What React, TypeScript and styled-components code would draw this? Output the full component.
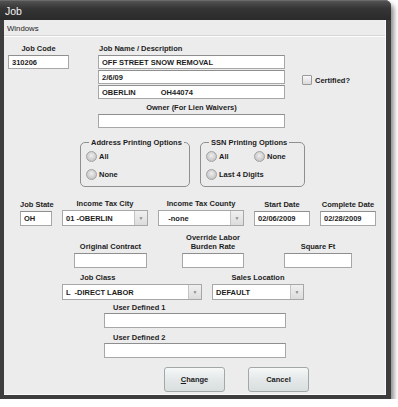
import React from 'react';
import styled, { createGlobalStyle } from 'styled-components';

const Global = createGlobalStyle`
    html, body {
        margin: 0;
        padding: 0;
        background: #ffffff;
    }
    body {
        font-family: "Liberation Sans", Arial, sans-serif;
    }
`;

const Window = styled.div`
    width: 391px;
    background: #3d3d3d;
    border-radius: 0 6px 0 0;
    box-shadow: 3px 4px 5px rgba(0, 0, 0, 0.45);
`;

const TitleBar = styled.div`
    height: 20px;
    display: flex;
    align-items: center;
    padding-left: 5px;
    box-sizing: border-box;
    border-radius: 0 6px 0 0;
    background: linear-gradient(#525252, #353535 40%, #2a2a2a);
    border-top: 1px solid #6a6a6a;
    color: #f4f4f4;
    font-size: 10.5px;
`;

const Frame = styled.div`
    padding: 0 5px 4px 4px;
`;

const Body = styled.div`
    background: #ececec;
    border-right: 1px solid #fbfbfb;
    border-bottom: 1px solid #fbfbfb;
    padding-bottom: 1px;
    color: #1c1c1c;
`;

const MenuBar = styled.div`
    height: 16px;
    display: flex;
    align-items: center;
    padding-left: 3px;
    font-size: 7.8px;
    border-bottom: 1px solid #fdfdfd;
    box-shadow: inset 0 -1px 0 #d6d6d6;
`;

const Row = styled.div<{ $mt: number }>`
    display: flex;
    align-items: flex-end;
    margin-top: ${p => p.$mt}px;
`;

const Field = styled.div<{ $ml: number; $w: number }>`
    display: flex;
    flex-direction: column;
    margin-left: ${p => p.$ml}px;
    width: ${p => p.$w}px;
`;

const Label = styled.div<{ $align?: string; $pl?: number; $gap?: number }>`
    font-size: 7.5px;
    font-weight: bold;
    line-height: 9px;
    white-space: nowrap;
    text-align: ${p => p.$align || 'center'};
    padding-left: ${p => p.$pl || 0}px;
    margin-bottom: ${p => (p.$gap === undefined ? 2 : p.$gap)}px;
`;

const TextBox = styled.div<{ $h?: number }>`
    height: ${p => p.$h || 15}px;
    box-sizing: border-box;
    background: #ffffff;
    border: 1px solid #a7a7a7;
    border-top-color: #8e8e8e;
    display: flex;
    align-items: center;
    padding-left: 3px;
    font-size: 7.5px;
    font-weight: bold;
    white-space: pre;
    & + & {
        margin-top: 1px;
    }
`;

const Select = styled.div`
    height: 16px;
    box-sizing: border-box;
    background: #ffffff;
    border: 1px solid #a7a7a7;
    display: flex;
    align-items: stretch;
    font-size: 7.5px;
    font-weight: bold;
`;

const SelectText = styled.div`
    flex: 1;
    display: flex;
    align-items: center;
    padding-left: 3px;
    white-space: pre;
`;

const DropButton = styled.div`
    width: 12px;
    background: linear-gradient(#f0f0f0, #dcdcdc);
    border-left: 1px solid #c4c4c4;
    display: flex;
    align-items: center;
    justify-content: center;
    color: #8a8a8a;
    font-size: 5px;
`;

const Certified = styled.label`
    display: flex;
    align-items: center;
    gap: 3px;
    margin-left: 17px;
    align-self: flex-start;
    margin-top: 31px;
    font-size: 7.5px;
    font-weight: bold;
`;

const CheckBox = styled.span`
    width: 10px;
    height: 10px;
    box-sizing: border-box;
    border: 1px solid #9a9a9a;
    background: linear-gradient(#f8f8f8, #dadada);
    border-radius: 1px;
`;

const Group = styled.fieldset<{ $ml: number; $w: number }>`
    margin: 0 0 0 ${p => p.$ml}px;
    width: ${p => p.$w}px;
    box-sizing: border-box;
    padding: 4px 0 6px 5px;
    border: 1px solid #8f8f8f;
    border-radius: 5px;
    min-width: 0;
`;

const Legend = styled.legend`
    font-size: 7.5px;
    font-weight: bold;
    line-height: 9px;
    padding: 0 2px;
    margin-left: 3px;
`;

const RadioGrid = styled.div`
    display: grid;
    grid-template-columns: 48px auto;
    row-gap: 7px;
`;

const Radio = styled.label<{ $span?: boolean }>`
    display: flex;
    align-items: center;
    gap: 2px;
    font-size: 7.5px;
    font-weight: bold;
    height: 11px;
    white-space: nowrap;
    grid-column: ${p => (p.$span ? '1 / span 2' : 'auto')};
`;

const RadioDot = styled.span`
    width: 11px;
    height: 11px;
    box-sizing: border-box;
    border-radius: 50%;
    border: 1px solid #a2a2a2;
    background: radial-gradient(circle at 50% 40%, #eeeeee, #c8c8c8 70%);
`;

const Button = styled.button<{ $ml: number }>`
    margin-left: ${p => p.$ml}px;
    width: 61px;
    height: 25px;
    border: 1px solid #a2a8a8;
    border-radius: 3px;
    background: linear-gradient(#f6f8f8, #e4e8e8 50%, #d9dede);
    font-family: "Liberation Sans", Arial, sans-serif;
    font-size: 7.5px;
    font-weight: bold;
    color: #1c1c1c;
    padding: 0;
    u {
        text-decoration: underline;
    }
`;

const Spacer = styled.div<{ $h: number }>`
    height: ${p => p.$h}px;
`;

const Drop = ({ text }: { text: string }) => (
    <Select>
        <SelectText>{text}</SelectText>
        <DropButton>▼</DropButton>
    </Select>
);

const App = () => {
    return (
        <>
            <Global />
            <Window>
                <TitleBar>Job</TitleBar>
                <Frame>
                    <Body>
                        <MenuBar>Windows</MenuBar>

                        <Row $mt={7}>
                            <Field $ml={4} $w={61} style={{ alignSelf: 'flex-start' }}>
                                <Label>Job Code</Label>
                                <TextBox $h={14}>310206</TextBox>
                            </Field>
                            <Field $ml={29} $w={187}>
                                <Label $align="left" $pl={1}>Job Name / Description</Label>
                                <TextBox $h={14}>OFF STREET SNOW REMOVAL</TextBox>
                                <TextBox $h={14}>2/6/09</TextBox>
                                <TextBox $h={14}>{'OBERLIN            OH44074'}</TextBox>
                            </Field>
                            <Certified>
                                <CheckBox />
                                Certified?
                            </Certified>
                        </Row>

                        <Row $mt={4}>
                            <Field $ml={94} $w={187}>
                                <Label>Owner (For Lien Waivers)</Label>
                                <TextBox $h={14} />
                            </Field>
                        </Row>

                        <Row $mt={10}>
                            <Group $ml={76} $w={110}>
                                <Legend>Address Printing Options</Legend>
                                <RadioGrid>
                                    <Radio $span><RadioDot />All</Radio>
                                    <Radio $span><RadioDot />None</Radio>
                                </RadioGrid>
                            </Group>
                            <Group $ml={10} $w={105}>
                                <Legend>SSN Printing Options</Legend>
                                <RadioGrid>
                                    <Radio><RadioDot />All</Radio>
                                    <Radio><RadioDot />None</Radio>
                                    <Radio $span><RadioDot />Last 4 Digits</Radio>
                                </RadioGrid>
                            </Group>
                        </Row>

                        <Row $mt={12}>
                            <Field $ml={16} $w={32}>
                                <Label>Job State</Label>
                                <TextBox>OH</TextBox>
                            </Field>
                            <Field $ml={10} $w={86}>
                                <Label>Income Tax City</Label>
                                <Drop text="01 -OBERLIN" />
                            </Field>
                            <Field $ml={10} $w={86}>
                                <Label>Income Tax County</Label>
                                <Drop text="   -none" />
                            </Field>
                            <Field $ml={10} $w={56}>
                                <Label>Start Date</Label>
                                <TextBox>02/06/2009</TextBox>
                            </Field>
                            <Field $ml={10} $w={56}>
                                <Label>Complete Date</Label>
                                <TextBox>02/28/2009</TextBox>
                            </Field>
                        </Row>

                        <Row $mt={7}>
                            <Field $ml={70} $w={73}>
                                <Label>Original Contract</Label>
                                <TextBox />
                            </Field>
                            <Field $ml={35} $w={62}>
                                <Label>Override Labor<br />Burden Rate</Label>
                                <TextBox />
                            </Field>
                            <Field $ml={40} $w={68}>
                                <Label>Square Ft</Label>
                                <TextBox />
                            </Field>
                        </Row>

                        <Row $mt={5}>
                            <Field $ml={58} $w={140}>
                                <Label $align="left" $pl={18}>Job Class</Label>
                                <Drop text="L  -DIRECT LABOR" />
                            </Field>
                            <Field $ml={10} $w={92}>
                                <Label>Sales Location</Label>
                                <Drop text="DEFAULT" />
                            </Field>
                        </Row>

                        <Row $mt={3}>
                            <Field $ml={100} $w={182}>
                                <Label $align="left" $pl={9} $gap={1}>User Defined 1</Label>
                                <TextBox />
                            </Field>
                        </Row>

                        <Row $mt={5}>
                            <Field $ml={100} $w={182}>
                                <Label $align="left" $pl={9} $gap={1}>User Defined 2</Label>
                                <TextBox />
                            </Field>
                        </Row>

                        <Row $mt={9}>
                            <Button $ml={160}><u>C</u>hange</Button>
                            <Button $ml={23}>Cancel</Button>
                        </Row>
                        <Spacer $h={1} />
                    </Body>
                </Frame>
            </Window>
        </>
    );
};

export default App;
